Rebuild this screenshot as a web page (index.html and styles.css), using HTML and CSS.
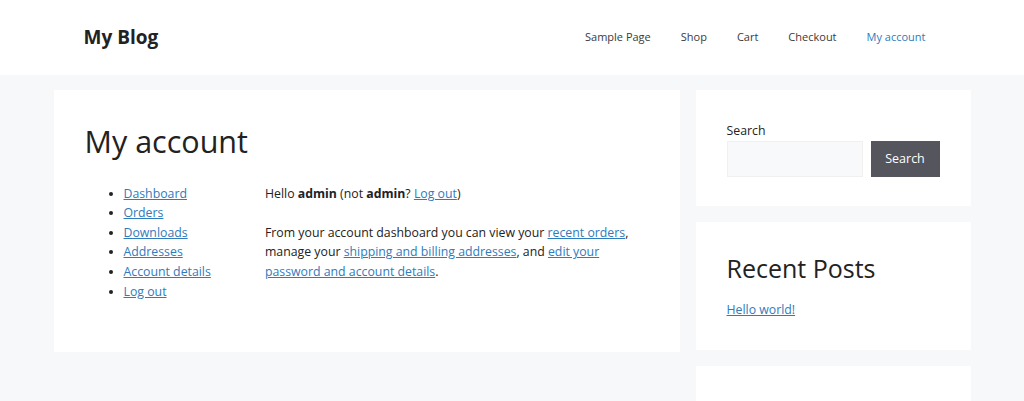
FILE: index.html
```html
<!DOCTYPE html>
<html lang="en">
<head>
    <meta charset="UTF-8">
    <meta name="viewport" content="width=device-width, initial-scale=1.0">
    <title>My account &ndash; My Blog</title>
    <link rel="stylesheet" href="styles.css">
</head>
<body>
    <header class="site-header">
        <div class="header-inner">
            <a href="#" class="site-title">My Blog</a>
            <nav class="main-nav">
                <a href="#">Sample Page</a>
                <a href="#">Shop</a>
                <a href="#">Cart</a>
                <a href="#">Checkout</a>
                <a href="#" class="current">My account</a>
            </nav>
        </div>
    </header>
    <div class="site-content">
        <main class="content-area">
            <h1 class="entry-title">My account</h1>
            <div class="account">
                <nav class="account-nav">
                    <ul>
                        <li><a href="#">Dashboard</a></li>
                        <li><a href="#">Orders</a></li>
                        <li><a href="#">Downloads</a></li>
                        <li><a href="#">Addresses</a></li>
                        <li><a href="#">Account details</a></li>
                        <li><a href="#">Log out</a></li>
                    </ul>
                </nav>
                <div class="account-content">
                    <p>Hello <strong>admin</strong> (not <strong>admin</strong>? <a href="#">Log out</a>)</p>
                    <p>From your account dashboard you can view your <a href="#">recent orders</a>, manage your <a href="#">shipping and billing addresses</a>, and <a href="#">edit your password and account details</a>.</p>
                </div>
            </div>
        </main>
        <aside class="sidebar">
            <section class="widget widget-search">
                <form class="search-form">
                    <label for="s" class="search-label">Search</label>
                    <div class="search-row">
                        <input type="search" id="s" class="search-field">
                        <button type="submit" class="search-button">Search</button>
                    </div>
                </form>
            </section>
            <section class="widget">
                <h2 class="widget-title">Recent Posts</h2>
                <ul class="recent-posts">
                    <li><a href="#">Hello world!</a></li>
                </ul>
            </section>
            <section class="widget widget-empty"></section>
        </aside>
    </div>
</body>
</html>
```

FILE: styles.css
```css
body
{
    margin: 0;
    background: #f7f8f9;
    color: #222222;
    font-family: "Open Sans", "Noto Sans", sans-serif;
    font-size: 12.3px;
    line-height: 19.6px;
}

a
{
    color: #2f7bbb;
}

.site-header
{
    background: #ffffff;
    height: 75px;
}

.header-inner
{
    width: 917px;
    margin: 0 auto;
    padding: 0 30px;
    box-sizing: border-box;
    height: 100%;
    display: flex;
    align-items: center;
    justify-content: space-between;
}

.site-title
{
    color: #222222;
    text-decoration: none;
    font-weight: bold;
    font-size: 19px;
}

.main-nav
{
    display: flex;
    margin-top: -2px;
}

.main-nav a
{
    color: #3a3a3a;
    text-decoration: none;
    font-size: 11px;
    padding: 0 15px;
    line-height: 60px;
}

.main-nav a.current
{
    color: #2f7bbb;
}

.site-content
{
    width: 917px;
    margin: 15px auto 0;
    display: flex;
    gap: 16px;
    align-items: flex-start;
}

.content-area
{
    background: #ffffff;
    width: 626px;
    padding: 33px 31px 31px;
    box-sizing: border-box;
}

.entry-title
{
    font-size: 30.5px;
    font-weight: 400;
    line-height: 1.2;
    margin: 0 0 24px;
}

.account
{
    display: flex;
    justify-content: space-between;
}

.account-nav
{
    width: 30%;
}

.account-nav ul
{
    margin: 0 0 20px 39px;
    padding: 0;
}

.account-content
{
    width: 68%;
}

.account-content p
{
    margin: 0 0 19.6px;
}

.sidebar
{
    width: 275px;
    display: flex;
    flex-direction: column;
    gap: 16px;
}

.widget
{
    background: #ffffff;
    padding: 31px;
}

.widget-search
{
    padding-bottom: 29px;
}

.search-label
{
    display: block;
}

.search-row
{
    display: flex;
    gap: 8px;
}

.search-field
{
    width: 136px;
    height: 36px;
    box-sizing: border-box;
    border: 1px solid #f0f0f0;
    background: #f8f9fa;
    padding: 0 10px;
}

.search-button
{
    width: 70px;
    height: 36px;
    border: none;
    background: #55555e;
    color: #ffffff;
    font-family: inherit;
    font-size: 12.5px;
}

.widget-title
{
    font-size: 25px;
    font-weight: 400;
    line-height: 1.2;
    margin: 0 0 17px;
}

.recent-posts
{
    list-style: none;
    margin: 0;
    padding: 0;
}

.widget-empty
{
    height: 60px;
}
```
